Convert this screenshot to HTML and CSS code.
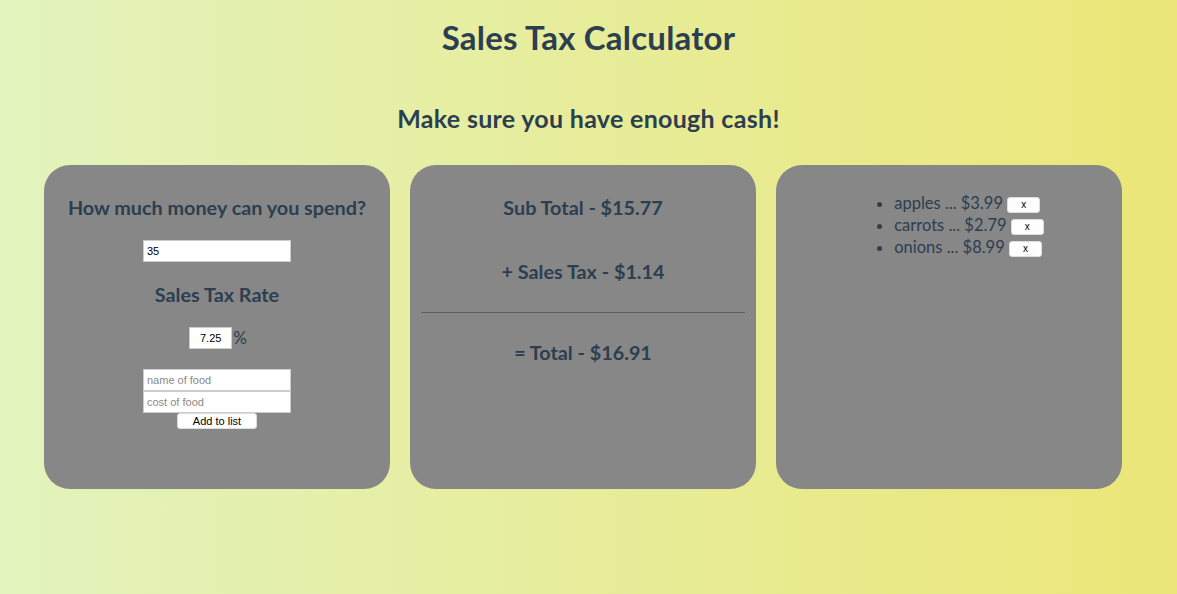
FILE: index.html
```html
<!DOCTYPE html>
<html lang="en">
<head>
  <meta charset="UTF-8">
  <title>Sales Tax Calculator</title>
  <link rel="stylesheet" href="styles.css">
</head>
<body>
  <h1>Sales Tax Calculator</h1>
  <h2>Make sure you have enough cash!</h2>

  <div class="cards">
    <div class="card">
      <h3>How much money can you spend?</h3>
      <input type="text" class="wide" value="35">
      <h3>Sales Tax Rate</h3>
      <div class="rate"><input type="text" class="small" value="7.25">%</div>
      <div class="food">
        <input type="text" class="wide" placeholder="name of food">
        <input type="text" class="wide" placeholder="cost of food">
        <button>Add to list</button>
      </div>
    </div>

    <div class="card totals">
      <h3>Sub Total - $15.77</h3>
      <h3>+ Sales Tax - $1.14</h3>
      <hr>
      <h3>= Total - $16.91</h3>
    </div>

    <div class="card">
      <ul class="list">
        <li>apples ... $3.99 <button>x</button></li>
        <li>carrots ... $2.79 <button>x</button></li>
        <li>onions ... $8.99 <button>x</button></li>
      </ul>
    </div>
  </div>
</body>
</html>
```

FILE: styles.css
```css
* { box-sizing: border-box; }
html, body { height: 100%; }
body {
  margin: 0;
  font-family: Lato, 'Noto Sans', sans-serif;
  color: #2c3e50;
  background: linear-gradient(90deg, #e2f3bd, #ebe677);
  text-align: center;
}
h1 {
  font-size: 33px;
  margin: 0;
  padding-top: 17px;
  line-height: 40px;
  letter-spacing: 0.2px;
}
h2 {
  font-size: 25px;
  margin: 46px 0 0;
  line-height: 30px;
  letter-spacing: 0.3px;
}
.cards {
  display: grid;
  grid-template-columns: repeat(3, 346px);
  gap: 20px;
  padding-left: 44px;
  margin-top: 32px;
}
.card {
  background: #878787;
  border-radius: 26px;
  height: 324px;
  padding-top: 30px;
}
h3 {
  font-size: 19.8px;
  margin: 0;
  line-height: 24px;
}
input {
  font-family: 'Liberation Sans', Arial, sans-serif;
  font-size: 11px;
  border: 1px solid #ccc;
  background: #fff;
  padding: 2px 3px;
  height: 22px;
  color: #000;
}
input::placeholder { color: #8a8a8a; }
.wide { width: 148px; display: block; margin: 0 auto; }
.card > .wide { margin: 21px auto 20px; }
.rate {
  margin-top: 21px;
  font-size: 17px;
  line-height: 22px;
  padding-left: 2px;
}
.small {
  width: 43px;
  text-align: center;
  vertical-align: top;
  margin-right: 1px;
}
.food { margin-top: 20px; }
button {
  font-family: 'Liberation Sans', Arial, sans-serif;
  font-size: 11px;
  background: #fff;
  border: 1px solid #ddd;
  border-radius: 3px;
  color: #000;
  padding: 0;
  height: 16px;
}
.food button { width: 80px; display: block; margin: 0 auto; }
.totals h3 { margin-bottom: 40px; }
.totals hr {
  border: none;
  border-top: 1px solid #5f5f5f;
  margin: -11px 11px 27px;
}
.list {
  font-size: 16.5px;
  list-style: disc;
  margin: 0;
  padding: 0;
  display: inline-block;
  text-align: left;
  line-height: 22px;
  margin-left: 40px;
  margin-top: -3px;
}
.list li { white-space: nowrap; }
.list button {
  width: 33px;
  height: 16px;
  font-size: 10px;
  vertical-align: middle;
}
```
